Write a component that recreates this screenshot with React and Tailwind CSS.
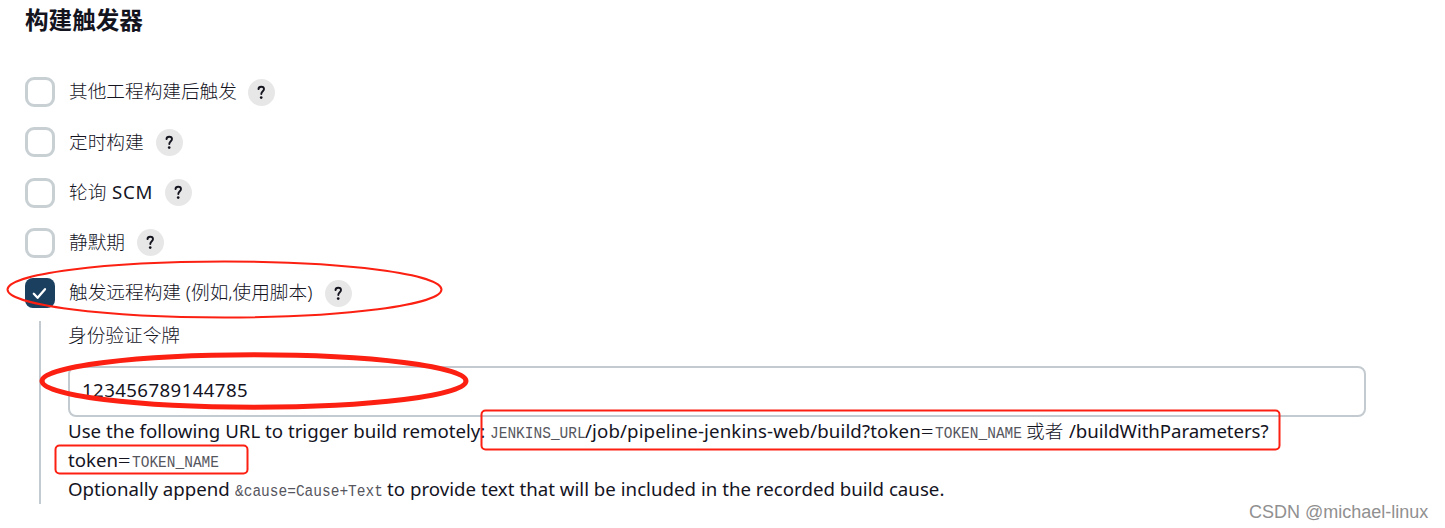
const triggers = [
  { label: '其他工程构建后触发', width: 'w-[168px]' },
  { label: '定时构建', width: 'w-[76px]' },
  { label: '轮询', suffix: ' SCM', width: 'w-[85px]' },
  { label: '静默期', width: 'w-[57px]' },
  { label: '触发远程构建 (例如,使用脚本)', width: 'w-[245px]', checked: true },
];

function Checkbox({ checked }) {
  if (checked) {
    return (
      <span className="flex size-[30px] shrink-0 items-center justify-center rounded-[8px] bg-[#1b3f5f]">
        <svg viewBox="0 0 30 30" className="size-[30px]" fill="none" stroke="white" strokeWidth="2.3" strokeLinecap="round" strokeLinejoin="round">
          <path d="M8.8 15.8 12.6 19.8 20 11.2" />
        </svg>
      </span>
    );
  }
  return <span className="size-[30px] shrink-0 rounded-[9px] border-3 border-[#c9d0d4] bg-white" />;
}

function Help() {
  return (
    <span className="flex size-[27px] shrink-0 items-center justify-center rounded-full bg-[#e7e7e7]">
      <svg viewBox="0 0 27 27" className="size-[27px]" fill="none" stroke="#14141f" strokeWidth="1.9" strokeLinecap="round" strokeLinejoin="round">
        <path d="M10.5 10.1C10.6 8.5 11.8 7.7 13.2 7.7C14.8 7.7 16 8.7 16 10.1C16 12.2 13.3 12.4 13.3 15" />
        <circle cx="13.2" cy="18.6" r="1.35" fill="#14141f" stroke="none" />
      </svg>
    </span>
  );
}

function Run({ className = '', children }) {
  return <span className={`inline-block whitespace-pre ${className}`}>{children}</span>;
}

function Code({ className = '', children }) {
  return (
    <Run className={`origin-[0_68%] scale-y-[1.2] font-['Liberation_Mono',monospace] text-[14.5px] text-[#56565e] ${className}`}>{children}</Run>
  );
}

export default function App() {
  return (
    <div className="relative h-[528px] w-[1445px] overflow-hidden bg-white font-['Noto_Sans','Noto_Sans_CJK_SC',sans-serif] text-[18.67px] text-[#14141f]">
      <h2 className="pl-[25px] pt-[5px] text-[23.6px] leading-[30px] font-bold">构建触发器</h2>
      <div className="mt-[42px] flex flex-col gap-[20.3px] pl-[25px]">
        {triggers.map((t) => (
          <div key={t.label} className="flex h-[30px] items-center">
            <Checkbox checked={t.checked} />
            <span className={`ml-[14px] pb-[1.4px] whitespace-pre font-light leading-[28px] ${t.width}`}>
              {t.label}
              {t.suffix && <span className="font-normal tracking-[0.8px]">{t.suffix}</span>}
            </span>
            <span className="ml-[11px]"><Help /></span>
          </div>
        ))}
      </div>
      <div className="ml-[39px] mt-[13px] h-[183px] border-l-2 border-[#c3cbd0] pl-[27px]">
        <div className="h-[45px] font-light leading-[28px]">身份验证令牌</div>
        <div className="flex h-[51px] w-[1298px] items-center rounded-[8px] border-2 border-[#c3cbd0] pl-[12px]">
          <span className="pb-[3px] tracking-[0.4px]">123456789144785</span>
        </div>
        <div className="whitespace-nowrap leading-[27px]">
          <div className="flex h-[29px] items-baseline">
            <Run className="w-[422px]">Use the following URL to trigger build remotely:</Run>
            <Code className="w-[95px]">JENKINS_URL</Code>
            <Run className="w-[337px] tracking-[0.12px]">/job/pipeline-jenkins-web/build?token</Run>
            <Run className="w-[13px] scale-x-[1.2] font-light">=</Run>
            <Code className="w-[91px]">TOKEN_NAME</Code>
            <Run className="w-[43px] font-light">或者</Run>
            <Run className="tracking-[-0.07px]">/buildWithParameters?</Run>
          </div>
          <div className="flex h-[29px] items-baseline">
            <Run className="w-[51px]">token</Run>
            <Run className="w-[13px] scale-x-[1.2] font-light">=</Run>
            <Code>TOKEN_NAME</Code>
          </div>
          <div className="flex h-[29px] items-baseline">
            <Run className="w-[167px]">Optionally append</Run>
            <Code className="w-[152px]">&amp;cause=Cause+Text</Code>
            <Run className="tracking-[0.02px]">to provide text that will be included in the recorded build cause.</Run>
          </div>
        </div>
      </div>
      <svg className="pointer-events-none absolute inset-0" width="1445" height="528" fill="none" stroke="#fb2012">
        <ellipse cx="224.5" cy="289.5" rx="217" ry="28" strokeWidth="2" />
        <ellipse cx="254" cy="381" rx="212" ry="26.2" strokeWidth="5" />
        <rect x="481.5" y="410.5" width="798" height="39" rx="4" strokeWidth="2" />
        <rect x="55.5" y="445.5" width="192" height="28" rx="4" strokeWidth="2" />
      </svg>
      <div className="absolute left-[1249px] top-[499px] font-['Liberation_Sans',sans-serif] text-[18px] leading-[26px] whitespace-nowrap text-[#909090]">CSDN @michael-linux</div>
    </div>
  );
}
